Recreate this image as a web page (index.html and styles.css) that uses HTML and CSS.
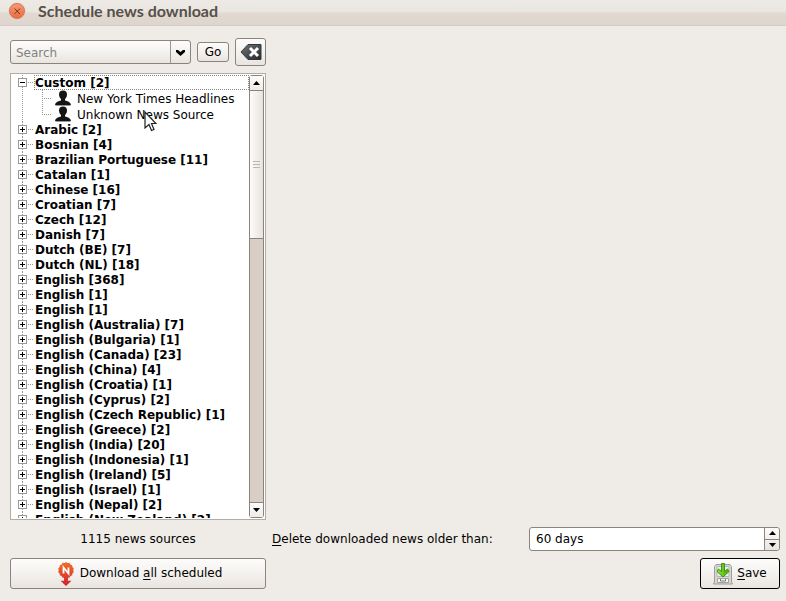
FILE: index.html
```
<!DOCTYPE html>
<html lang="en">

<head>
    <meta charset="UTF-8">
    <meta name="viewport" content="width=device-width, initial-scale=1.0">
    <title>Schedule news download</title>
    <link rel="stylesheet" href="styles.css">
</head>

<body>

    <header class="titlebar">
        <button class="close" type="button" aria-label="Close">
            <svg width="18" height="18" viewBox="0 0 18 18">
                <defs>
                    <linearGradient id="orange" x1="0" y1="0" x2="0" y2="1">
                        <stop offset="0" stop-color="#f79a78"/>
                        <stop offset="1" stop-color="#ec6a38"/>
                    </linearGradient>
                </defs>
                <circle cx="9" cy="9" r="8.5" fill="#d9cfc7"/>
                <circle cx="9" cy="9" r="7.5" fill="url(#orange)" stroke="#d97a54"/>
                <path d="M6.500 6.500l5.500 5.500M12 6.500l-5.500 5.500" stroke="#6b3a25"/>
            </svg>
        </button>
        <h1>Schedule news download</h1>
    </header>

    <main class="dialog">

        <form class="search">
            <div class="combo">
                <input type="text" id="search" placeholder="Search" aria-label="Search">
                <button class="drop" type="button" aria-label="Show previous searches">
                    <svg width="9" height="7" viewBox="0 0 9 7"><path d="M0 1h2l2.5 2L7 1h2v2L4.5 7 0 3z" fill="#000"/></svg>
                </button>
            </div>
            <button class="btn go" type="button">Go</button>
            <button class="btn clear" type="button" aria-label="Clear search">
                <svg width="22" height="18" viewBox="0 0 22 18">
                    <defs>
                        <linearGradient id="dark" x1="0" y1="0" x2="1" y2="1">
                            <stop offset="0" stop-color="#70777a"/>
                            <stop offset="1" stop-color="#25292b"/>
                        </linearGradient>
                    </defs>
                    <path d="M1 9L8 1.500h13v15H8z" fill="url(#dark)" stroke="#33383a"/>
                    <path d="M10 5l8 8M18 5l-8 8" stroke="#fff" stroke-width="3"/>
                </svg>
            </button>
        </form>

        <div class="treebox">
            <ul class="tree">
                <li class="open">
                    <div class="row"><button class="toggle minus" type="button" aria-label="Collapse"></button><span class="name focus">Custom [2]</span></div>
                    <ul class="sources">
                        <li>
                            <svg class="person" width="16" height="16" viewBox="0 0 16 16"><path d="M8 0.500c2.600 0 4 1.600 4 4 0 2.200-1 3.800-2 4.600v1.400c2.500.8 5.500 1.200 6 4.700H0c.5-3.500 3.500-3.900 6-4.700V9.100C5 8.300 4 6.700 4 4.500c0-2.400 1.400-4 4-4z" fill="#151515"/><path d="M1 15.500h14" stroke="#999"/></svg>
                            <span class="source">New York Times Headlines</span>
                        </li>
                        <li>
                            <svg class="person" width="16" height="16" viewBox="0 0 16 16"><path d="M8 0.500c2.600 0 4 1.600 4 4 0 2.200-1 3.800-2 4.600v1.400c2.500.8 5.500 1.200 6 4.700H0c.5-3.500 3.500-3.900 6-4.700V9.100C5 8.300 4 6.700 4 4.500c0-2.400 1.400-4 4-4z" fill="#151515"/><path d="M1 15.500h14" stroke="#999"/></svg>
                            <span class="source">Unknown News Source
                                <svg class="cursor" width="13" height="21" viewBox="0 0 13 21"><path d="M1 1v16l4-3.500 2.500 6 2.500-1-2.500-6H12z" fill="#fff" stroke="#222" stroke-width="1.200"/></svg>
                            </span>
                        </li>
                    </ul>
                </li>
                <li><div class="row"><button class="toggle" type="button" aria-label="Expand"></button><span class="name">Arabic [2]</span></div></li>
                <li><div class="row"><button class="toggle" type="button" aria-label="Expand"></button><span class="name">Bosnian [4]</span></div></li>
                <li><div class="row"><button class="toggle" type="button" aria-label="Expand"></button><span class="name">Brazilian Portuguese [11]</span></div></li>
                <li><div class="row"><button class="toggle" type="button" aria-label="Expand"></button><span class="name">Catalan [1]</span></div></li>
                <li><div class="row"><button class="toggle" type="button" aria-label="Expand"></button><span class="name">Chinese [16]</span></div></li>
                <li><div class="row"><button class="toggle" type="button" aria-label="Expand"></button><span class="name">Croatian [7]</span></div></li>
                <li><div class="row"><button class="toggle" type="button" aria-label="Expand"></button><span class="name">Czech [12]</span></div></li>
                <li><div class="row"><button class="toggle" type="button" aria-label="Expand"></button><span class="name">Danish [7]</span></div></li>
                <li><div class="row"><button class="toggle" type="button" aria-label="Expand"></button><span class="name">Dutch (BE) [7]</span></div></li>
                <li><div class="row"><button class="toggle" type="button" aria-label="Expand"></button><span class="name">Dutch (NL) [18]</span></div></li>
                <li><div class="row"><button class="toggle" type="button" aria-label="Expand"></button><span class="name">English [368]</span></div></li>
                <li><div class="row"><button class="toggle" type="button" aria-label="Expand"></button><span class="name">English [1]</span></div></li>
                <li><div class="row"><button class="toggle" type="button" aria-label="Expand"></button><span class="name">English [1]</span></div></li>
                <li><div class="row"><button class="toggle" type="button" aria-label="Expand"></button><span class="name">English (Australia) [7]</span></div></li>
                <li><div class="row"><button class="toggle" type="button" aria-label="Expand"></button><span class="name">English (Bulgaria) [1]</span></div></li>
                <li><div class="row"><button class="toggle" type="button" aria-label="Expand"></button><span class="name">English (Canada) [23]</span></div></li>
                <li><div class="row"><button class="toggle" type="button" aria-label="Expand"></button><span class="name">English (China) [4]</span></div></li>
                <li><div class="row"><button class="toggle" type="button" aria-label="Expand"></button><span class="name">English (Croatia) [1]</span></div></li>
                <li><div class="row"><button class="toggle" type="button" aria-label="Expand"></button><span class="name">English (Cyprus) [2]</span></div></li>
                <li><div class="row"><button class="toggle" type="button" aria-label="Expand"></button><span class="name">English (Czech Republic) [1]</span></div></li>
                <li><div class="row"><button class="toggle" type="button" aria-label="Expand"></button><span class="name">English (Greece) [2]</span></div></li>
                <li><div class="row"><button class="toggle" type="button" aria-label="Expand"></button><span class="name">English (India) [20]</span></div></li>
                <li><div class="row"><button class="toggle" type="button" aria-label="Expand"></button><span class="name">English (Indonesia) [1]</span></div></li>
                <li><div class="row"><button class="toggle" type="button" aria-label="Expand"></button><span class="name">English (Ireland) [5]</span></div></li>
                <li><div class="row"><button class="toggle" type="button" aria-label="Expand"></button><span class="name">English (Israel) [1]</span></div></li>
                <li><div class="row"><button class="toggle" type="button" aria-label="Expand"></button><span class="name">English (Nepal) [2]</span></div></li>
                <li><div class="row"><button class="toggle" type="button" aria-label="Expand"></button><span class="name">English (New Zealand) [2]</span></div></li>
            </ul>
            <div class="scrollbar">
                <button class="arrow" type="button" aria-label="Scroll up"><svg width="7" height="4" viewBox="0 0 7 4"><path d="M3.500 0L7 4H0z"/></svg></button>
                <div class="track"><div class="thumb"><i></i><i></i><i></i></div></div>
                <button class="arrow" type="button" aria-label="Scroll down"><svg width="7" height="4" viewBox="0 0 7 4"><path d="M3.500 4L0 0h7z"/></svg></button>
            </div>
        </div>

        <p class="count">1115 news sources</p>
        <label class="older" for="days"><u>D</u>elete downloaded news older than:</label>
        <div class="spin">
            <input type="text" id="days" value="60 days">
            <div class="steps">
                <button type="button" aria-label="More days"><svg width="7" height="4" viewBox="0 0 7 4"><path d="M3.500 0L7 4H0z"/></svg></button>
                <button type="button" aria-label="Fewer days"><svg width="7" height="4" viewBox="0 0 7 4"><path d="M3.500 4L0 0h7z"/></svg></button>
            </div>
        </div>

        <button class="btn download" type="button">
            <svg width="16" height="24" viewBox="0 0 16 24">
                <defs>
                    <linearGradient id="red" x1="0" y1="0" x2="0" y2="1">
                        <stop offset="0" stop-color="#f0702a"/>
                        <stop offset="1" stop-color="#d0202c"/>
                    </linearGradient>
                </defs>
                <path d="M8 0l1.500 1L11.400.8l1 1.600 1.800.8.2 1.900L15.800 6.500 15.200 8.300l.6 1.800-1.400 1.300-.2 1.900-1.800.8-1 1.600-1.400.1v3h3.500L8 24l-5.500-5.200H6v-3l-1.400-.1-1-1.600-1.800-.8-.2-1.900L.2 10.100.8 8.300.2 6.500l1.400-1.400.2-1.900 1.800-.8 1-1.600L6.500 1z" fill="url(#red)"/>
                <path d="M5.500 11.500v-6l5 6v-6" fill="none" stroke="#fff" stroke-width="1.800"/>
            </svg>
            <span>Download <u>a</u>ll scheduled</span>
        </button>
        <button class="btn save" type="button">
            <svg width="20" height="22" viewBox="0 0 20 22">
                <defs>
                    <linearGradient id="green" x1="0" y1="0" x2="1" y2="0">
                        <stop offset="0" stop-color="#8be83a"/>
                        <stop offset="1" stop-color="#45a70c"/>
                    </linearGradient>
                </defs>
                <path d="M3 1.500h14l1.500 2V19l1 2H.500l1-2V3.500z" fill="#d7d8d5" stroke="#9b9d99"/>
                <path d="M4 3.500h12v10H4z" fill="#eeeeec" stroke="#b5b7b3"/>
                <path d="M4.500 15.500h11v4h-11z" fill="#f6f6f5" stroke="#a0a29e"/>
                <path d="M7.500 16v2h5v-2" fill="none" stroke="#777"/>
                <path d="M8.500.500h3v8l3-2.500 1.500 2.500-6 5.500-6-5.500L5.500 6l3 2.500z" fill="url(#green)" stroke="#3f930e"/>
            </svg>
            <span><u>S</u>ave</span>
        </button>

    </main>

</body>

</html>
```
FILE: styles.css
```
* {
    margin: 0;
    padding: 0;
    box-sizing: border-box;
}

body {
    display: flex;
    flex-direction: column;
    height: 100vh;
    background-color: #efebe7;
    color: #000;
    font: 12px/15px "DejaVu Sans", sans-serif;
}

button,
input {
    font: inherit;
    color: inherit;
}

button {
    display: flex;
    align-items: center;
    justify-content: center;
    border: none;
    background: none;
}

ul {
    list-style: none;
}

u {
    text-underline-offset: 2px;
}

.titlebar {
    display: flex;
    align-items: center;
    gap: 12px;
    height: 26px;
    padding: 0 8px 3px;
    background: linear-gradient(#edeae5, #eae6e1 45%, #e0d8d1 55%, #ded5ce);
    border-bottom: 1px solid #d5ccc5;
}

.titlebar h1 {
    color: #57504a;
    font: bold 16px/20px Lato, sans-serif;
}

.dialog {
    flex: 1;
    min-height: 0;
    display: grid;
    grid-template-columns: 256px 1fr 1fr;
    grid-template-rows: 28px minmax(0, 1fr) 24px 31px;
    gap: 7px 6px;
    padding: 12px 6px 12px 10px;
}

.btn {
    border: 1px solid #8a847d;
    border-radius: 3px;
    background: linear-gradient(#fdfcfb, #f4f2ef 50%, #e9e4df);
}

.search {
    grid-column: 1;
    display: flex;
    align-items: center;
    gap: 6px;
}

.combo {
    flex: 1;
    display: flex;
    height: 24px;
    min-width: 0;
    border: 1px solid #8a847d;
    border-radius: 3px;
    background: linear-gradient(#fdfcfb, #f4f2ef 50%, #e9e4df);
}

.combo input {
    flex: 1;
    min-width: 0;
    padding: 2px 5px 0;
    border: none;
    background: none;
    outline: none;
}

.combo input::placeholder {
    color: #85817d;
}

.drop {
    width: 20px;
    border-left: 1px solid #9d9790;
}

.go {
    width: 32px;
    height: 20px;
}

.clear {
    width: 31px;
    height: 28px;
}

.treebox {
    grid-column: 1;
    grid-row: 2;
    display: flex;
    padding: 1px;
    border: 1px solid #b2aca6;
    background-color: #fff;
}

.tree {
    flex: 1;
    min-width: 0;
    overflow: hidden;
}

/* dotted line joining the expanders */
.tree > li {
    padding-left: 6px;
    background: repeating-linear-gradient(#999 0 1px, transparent 1px 2px) 10px 0 / 1px 100% no-repeat;
}

.row {
    display: flex;
    align-items: center;
    height: 15px;
    background: repeating-linear-gradient(90deg, #999 0 1px, transparent 1px 2px) 10px 7px / 5px 1px no-repeat;
}

.toggle {
    width: 9px;
    height: 9px;
    margin-right: 7px;
    border: 1px solid #999;
    background:
        linear-gradient(#000, #000) 1px 3px / 5px 1px no-repeat,
        linear-gradient(#000, #000) 3px 1px / 1px 5px no-repeat,
        #fff;
}

.toggle.minus {
    background: linear-gradient(#000, #000) 1px 3px / 5px 1px no-repeat #fff;
}

.name {
    flex: 1;
    height: 15px;
    padding-top: 1px;
    border: 1px solid transparent;
    font-weight: bold;
    line-height: 13px;
    white-space: nowrap;
}

.focus {
    border: 1px dotted #888;
}

.sources {
    padding-left: 24px;
    background: repeating-linear-gradient(#999 0 1px, transparent 1px 2px) 24px 0 / 1px 25px no-repeat;
}

.sources li {
    display: flex;
    align-items: center;
    gap: 6px;
    height: 16px;
    padding-left: 13px;
    background: repeating-linear-gradient(90deg, #999 0 1px, transparent 1px 2px) 0 8px / 9px 1px no-repeat;
}

.person {
    flex: none;
}

.source {
    position: relative;
    padding-top: 2px;
}

.cursor {
    position: absolute;
    left: 67px;
    top: 5px;
}

.scrollbar {
    display: flex;
    flex-direction: column;
    width: 15px;
    border: 1px solid #8a847d;
    border-radius: 3px;
    background-color: #d8cec6;
}

.arrow {
    height: 14px;
    background: linear-gradient(#fdfcfb, #eeebe7);
}

.track {
    flex: 1;
    border: solid #8a847d;
    border-width: 1px 0;
}

.thumb {
    display: flex;
    flex-direction: column;
    align-items: center;
    justify-content: center;
    gap: 2px;
    height: 36%;
    border-bottom: 1px solid #8a847d;
    background: linear-gradient(90deg, #fdfcfb, #e7e2dc);
}

.thumb i {
    width: 7px;
    height: 1px;
    background-color: #bdb6af;
}

.count {
    grid-column: 1;
    grid-row: 3;
    align-self: center;
    text-align: center;
}

.older {
    grid-column: 2;
    grid-row: 3;
    align-self: center;
}

.spin {
    grid-column: 3;
    grid-row: 3;
    display: flex;
    border: 1px solid #8a847d;
    border-radius: 3px;
    background-color: #fff;
}

.spin input {
    flex: 1;
    min-width: 0;
    padding: 0 6px;
    border: none;
    background: none;
    outline: none;
}

.steps {
    display: flex;
    flex-direction: column;
    width: 15px;
    border-left: 1px solid #8a847d;
    border-radius: 0 3px 3px 0;
    background: linear-gradient(#fdfcfb, #e9e4df);
}

.steps button {
    flex: 1;
}

.steps button + button {
    border-top: 1px solid #8a847d;
}

.download {
    grid-column: 1;
    grid-row: 4;
    gap: 6px;
    padding-left: 4px;
}

.save {
    grid-column: 3;
    grid-row: 4;
    justify-self: end;
    gap: 4px;
    width: 80px;
    border-color: #000;
}
```
